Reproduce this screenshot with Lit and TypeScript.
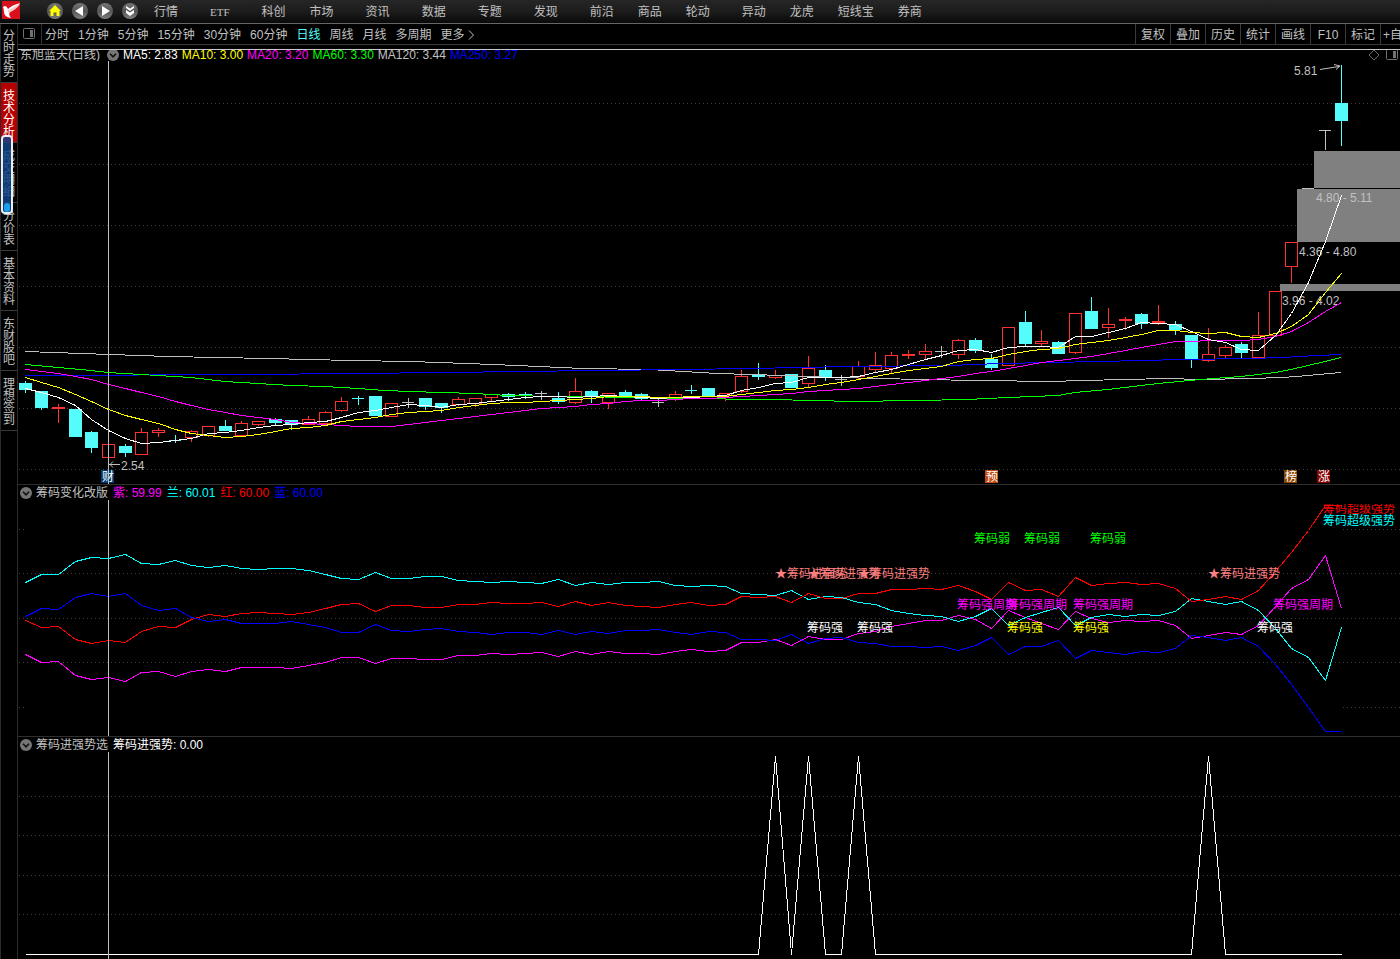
import { LitElement, html, svg, css } from "lit";
import { customElement, state } from "lit/decorators.js";
import { classMap } from "lit/directives/class-map.js";

type Kind = "up" | "down" | "flat";
/** kind, body top, body bottom, wick top, wick bottom */
type Candle = [Kind, number, number, number, number];

const FIRST_X = 25;
const STEP = 50 / 3;
const centre = (i: number) => Math.floor(FIRST_X + STEP * i + 0.01);

const CANDLES: Candle[] = [
  ["down", 383, 390, 381, 393], ["down", 391, 408, 391, 410], ["up", 407, 409, 404, 423], ["down", 409, 437, 409, 437],
  ["down", 432, 448, 431, 453], ["up", 444, 458, 444, 463], ["down", 446, 453, 444, 457], ["up", 432, 455, 428, 455],
  ["up", 430, 433, 428, 437], ["down", 440, 441, 435, 443], ["up", 431, 438, 430, 442], ["up", 426, 436, 426, 437],
  ["down", 426, 431, 420, 431], ["up", 423, 436, 421, 436], ["up", 421, 425, 421, 426], ["down", 419, 423, 418, 425],
  ["down", 420, 425, 420, 430], ["up", 419, 425, 416, 425], ["up", 412, 424, 411, 424], ["up", 401, 411, 397, 412],
  ["down", 398, 399, 396, 405], ["down", 396, 416, 396, 416], ["up", 403, 417, 403, 417], ["flat", 402, 403, 398, 408],
  ["down", 398, 407, 398, 410], ["down", 403, 408, 403, 413], ["up", 399, 405, 397, 406], ["up", 398, 404, 398, 407],
  ["up", 394, 398, 394, 401], ["down", 394, 397, 393, 401], ["down", 394, 396, 392, 399], ["flat", 393, 394, 391, 400],
  ["down", 398, 402, 392, 404], ["up", 391, 403, 378, 404], ["down", 391, 397, 390, 403], ["up", 393, 403, 393, 409],
  ["down", 392, 397, 390, 397], ["down", 394, 399, 393, 400], ["flat", 402, 403, 399, 407], ["up", 394, 399, 391, 401],
  ["down", 390, 391, 385, 394], ["down", 388, 396, 388, 396], ["up", 393, 396, 393, 401], ["up", 376, 392, 370, 393],
  ["down", 374, 377, 363, 380], ["up", 375, 378, 370, 379], ["down", 374, 388, 374, 388], ["up", 368, 384, 356, 388],
  ["down", 370, 377, 365, 381], ["flat", 379, 380, 375, 386], ["up", 366, 377, 361, 380], ["up", 365, 370, 352, 373],
  ["up", 355, 369, 352, 373], ["up", 354, 356, 350, 359], ["up", 351, 355, 344, 359], ["flat", 351, 352, 346, 358],
  ["up", 340, 355, 339, 359], ["down", 340, 351, 338, 353], ["down", 359, 368, 354, 370], ["up", 327, 366, 327, 366],
  ["down", 322, 344, 311, 346], ["up", 341, 344, 330, 346], ["down", 342, 354, 341, 354], ["up", 313, 353, 313, 354],
  ["down", 311, 329, 297, 329], ["up", 324, 328, 308, 338], ["up", 319, 321, 317, 330], ["down", 314, 324, 313, 329],
  ["up", 321, 323, 305, 325], ["down", 324, 330, 321, 335], ["down", 335, 359, 335, 368], ["up", 354, 361, 328, 362],
  ["up", 347, 356, 345, 359], ["down", 344, 353, 342, 359], ["up", 335, 358, 312, 358], ["up", 291, 336, 291, 336],
  ["up", 242, 267, 242, 283], ["flat", 188, 189, 188, 189], ["flat", 130, 131, 130, 150], ["down", 103, 121, 65, 146],
];

const MA5 = [388, 392, 397, 405, 419, 430, 438, 443, 442, 440, 438, 433, 432, 430, 427, 425, 424, 422, 421, 417,
  412, 410, 407, 404, 405, 407, 404, 403, 401, 399, 397, 396, 396, 397, 396, 395, 396, 397, 398, 397,
  397, 396, 395, 390, 387, 383, 382, 377, 377, 377, 376, 372, 369, 364, 359, 355, 350, 349, 352, 347,
  346, 346, 347, 336, 336, 332, 328, 322, 323, 324, 331, 339, 342, 349, 350, 335, 313, 282, 241, 195];
const MA10 = [377, 382, 387, 394, 401, 409, 415, 419, 423, 429, 433, 435, 437, 436, 434, 431, 428, 427, 425, 421,
  419, 417, 414, 412, 411, 410, 407, 405, 403, 402, 402, 401, 400, 399, 398, 396, 396, 396, 397, 397,
  396, 396, 396, 394, 392, 390, 389, 387, 384, 382, 379, 376, 373, 370, 368, 366, 361, 359, 358, 354,
  351, 349, 348, 344, 342, 340, 337, 334, 330, 330, 332, 333, 332, 336, 337, 333, 326, 314, 292, 273];
const MA20 = [369, 371, 373, 376, 379, 384, 388, 392, 396, 401, 405, 409, 412, 415, 417, 419, 422, 423, 424, 425,
  426, 426, 426, 424, 422, 420, 418, 416, 414, 412, 410, 408, 407, 406, 404, 403, 401, 400, 400, 399,
  398, 398, 397, 396, 395, 394, 393, 391, 390, 389, 388, 386, 384, 382, 380, 378, 376, 373, 371, 368,
  365, 362, 360, 358, 356, 353, 350, 347, 344, 341, 341, 340, 340, 340, 339, 336, 331, 322, 311, 302];

const MA60 = "25,364 58,367 91,370 108,372 141,374 191,377 225,381 258,383 291,385 325,386 358,388 385,390 410,391 442,392 475,393 491,394 508,395 558,396 650,397 683,398 767,399 817,400 850,401 917,400 967,399 1008,397 1058,395 1075,392 1108,389 1158,383 1200,379 1241,376 1275,372 1291,369 1325,361 1341,357";
const MA120 = "25,351 110,354 168,356 218,357 268,358 351,360 411,361 467,363 517,365 583,368 650,369 683,371 717,373 783,375 833,377 883,378 917,379 983,380 1050,381 1083,380 1167,378 1200,379 1250,378 1283,377 1308,375 1341,372";
const MA250 = "25,375 250,374 351,373 450,372 517,371 600,370 683,369 750,368 800,367 850,366 950,365 1000,363 1050,362 1100,361 1183,359 1250,358 1283,357 1317,355 1341,354";

const CYAN = [582, 574, 574, 561, 557, 558, 554, 563, 564, 560, 565, 567, 565, 568, 569, 568, 568, 570, 574, 578,
  579, 572, 578, 578, 576, 576, 580, 581, 582, 581, 582, 583, 579, 585, 582, 584, 582, 582, 581, 585,
  586, 585, 586, 593, 594, 595, 590, 599, 596, 597, 602, 604, 610, 613, 615, 616, 621, 616, 608, 625,
  617, 612, 607, 625, 617, 614, 616, 614, 615, 611, 598, 601, 604, 601, 610, 628, 648, 657, 680, 627];
const RED = [620, 627, 626, 639, 643, 640, 642, 631, 626, 627, 619, 614, 616, 613, 612, 613, 614, 612, 608, 604,
  603, 611, 605, 605, 607, 607, 604, 604, 602, 603, 603, 602, 606, 601, 605, 602, 605, 606, 607, 604,
  602, 605, 604, 596, 597, 596, 602, 593, 598, 598, 593, 593, 589, 589, 588, 589, 585, 591, 599, 582,
  590, 589, 596, 577, 585, 583, 582, 584, 583, 588, 601, 599, 596, 599, 590, 571, 552, 530, 505, 505];
const BLUE = [616, 608, 609, 597, 593, 596, 593, 605, 610, 608, 617, 621, 619, 623, 623, 623, 621, 624, 627, 632,
  632, 624, 630, 631, 629, 628, 631, 632, 634, 632, 632, 634, 630, 634, 631, 633, 630, 630, 629, 632,
  634, 631, 632, 639, 639, 640, 634, 643, 638, 637, 642, 643, 646, 646, 647, 646, 650, 645, 637, 654,
  646, 646, 640, 658, 650, 652, 654, 651, 652, 648, 635, 637, 640, 637, 646, 664, 684, 707, 731, 731];
const PURPLE = [654, 662, 661, 675, 679, 677, 681, 672, 671, 676, 671, 669, 671, 667, 667, 667, 668, 665, 662, 657,
  657, 663, 658, 658, 659, 659, 655, 655, 653, 654, 653, 652, 656, 651, 654, 651, 653, 653, 654, 651,
  649, 651, 650, 642, 642, 639, 645, 636, 639, 639, 633, 631, 626, 623, 620, 620, 615, 619, 628, 610,
  617, 623, 629, 611, 618, 622, 620, 621, 620, 625, 638, 635, 632, 634, 625, 606, 588, 579, 555, 608];

const SIGNALS = new Set([45, 47, 50, 71]);

const series = (ys: number[]) => ys.map((y, i) => `${centre(i) + 0.5},${y + 0.5}`).join(" ");

const MENU: [string, boolean][] = [
  ["行情", true], ["ETF", true], ["科创", false], ["市场", true], ["资讯", true], ["数据", true], ["专题", true],
  ["发现", true], ["前沿", false], ["商品", false], ["轮动", true], ["异动", false], ["龙虎", false],
  ["短线宝", false], ["券商", false],
];
const PERIODS = ["分时", "1分钟", "5分钟", "15分钟", "30分钟", "60分钟", "日线", "周线", "月线", "多周期"];
const TOOLS = ["复权", "叠加", "历史", "统计", "画线", "F10", "标记"];
const TABS = ["分时走势", "技术分析", "成交明细", "分价表", "基本资料", "东财股吧", "理想签到"];

const LABELS: [string, string, number, number][] = [
  ["green", "筹码弱", 974, 543], ["green", "筹码弱", 1024, 543], ["green", "筹码弱", 1090, 543],
  ["salmon", "★筹码进强势", 775, 578], ["salmon", "★筹码进强势", 808, 578],
  ["salmon", "★筹码进强势", 858, 578], ["salmon", "★筹码进强势", 1208, 578],
  ["magenta", "筹码强周期", 957, 609], ["magenta", "筹码强周期", 1007, 609],
  ["magenta", "筹码强周期", 1073, 609], ["magenta", "筹码强周期", 1273, 609],
  ["white", "筹码强", 807, 632], ["white", "筹码强", 857, 632], ["white", "筹码强", 1257, 632],
  ["yellow", "筹码强", 1007, 632], ["yellow", "筹码强", 1073, 632],
  ["cyan", "筹码超级强势", 1323, 525],
];
const BADGES: [string, number, string][] = [
  ["财", 101, "#003a70"], ["预", 985, "#c04a10"], ["榜", 1284, "#8a4600"], ["涨", 1317, "#840000"],
];

@customElement("app-root")
export class AppRoot extends LitElement {
  @state() private period = "日线";
  @state() private tab = "技术分析";

  static styles = css`
    :host {
      display: block;
      min-height: 100vh;
      background: #000;
      color: #c0c0c0;
      font: 12px/14px "Liberation Sans", "Noto Sans CJK SC", sans-serif;
      overflow: hidden;
    }
    * { box-sizing: border-box; }
    button {
      margin: 0;
      padding: 0;
      border: 0;
      background: none;
      color: inherit;
      font: inherit;
      white-space: nowrap;
      cursor: pointer;
    }
    svg { display: block; flex: none; }

    .top {
      display: flex;
      align-items: center;
      height: 24px;
      padding-left: 2px;
      border-bottom: 1px solid #666;
      background: linear-gradient(#262626, #1c1c1c 50%, #090909);
    }
    .logo { margin: -3px 26px 0 0; }
    .round { display: flex; width: 18px; margin: -1px 7px 0 0; }
    .menu { display: flex; gap: 24px; margin-left: 8px; white-space: nowrap; }
    .menu a { color: inherit; text-decoration: none; }
    .menu .wide { margin-right: 8px; }
    .menu .serif { font: 11px/14px "Liberation Serif", serif; }

    .body { display: flex; align-items: stretch; min-height: calc(100vh - 24px); }
    .side {
      position: relative;
      flex: none;
      display: flex;
      flex-direction: column;
      width: 18px;
      border: solid #2c2c2c;
      border-width: 0 1px;
    }
    .side button {
      padding: 7px 2px 4px;
      border-bottom: 1px solid #3a3a3a;
      line-height: 12px;
      white-space: normal;
      word-break: break-all;
    }
    .side button:first-child { padding: 6px 2px 4px; }
    .side .on { background: #b40000; color: #fff; }
    .thumb {
      position: absolute;
      left: 0;
      top: 111px;
      width: 12px;
      height: 79px;
      display: flex;
      flex-direction: column;
      align-items: center;
      justify-content: flex-end;
      border: 2px solid #e8eef6;
      border-radius: 4px;
      background: linear-gradient(rgba(50, 54, 120, 0.96), rgba(18, 68, 132, 0.86) 8px);
      pointer-events: none;
    }
    .thumb::after {
      content: "";
      width: 6px;
      height: 9px;
      border-radius: 3px;
      background: #1aa0ec;
    }

    .main { flex: 1; min-width: 0; }
    .bar {
      display: flex;
      height: 21px;
      border-bottom: 1px solid #3a3a3a;
      overflow: hidden;
    }
    .toggle {
      display: flex;
      align-items: center;
      width: 24px;
      padding-left: 4px;
      border-right: 1px solid #333;
    }
    .periods { display: flex; gap: 9px; margin-left: 3px; }
    .periods button { padding-top: 2px; }
    .periods .on { color: #54fcfc; }
    .more { display: flex; align-items: center; gap: 3px; }
    .tools { display: flex; margin-left: auto; }
    .tools button { width: 35px; padding-top: 2px; border-left: 1px solid #3a3a3a; }
    .tools .last { width: 20px; padding-left: 2px; overflow: hidden; text-align: left; }

    .panel { border-top: 1px solid #2e2e2e; }
    .panel.price { margin-top: 4px; border-top-color: #c8c8c8; }
    .legend {
      display: flex;
      align-items: center;
      gap: 5px;
      height: 15px;
      padding: 1px 0 0 2px;
      white-space: nowrap;
      overflow: hidden;
    }
    .price .legend { gap: 4px; height: 11px; align-items: flex-end; line-height: 12px; }
    .legend .title { display: flex; align-items: center; gap: 4px; }
    .price .title { gap: 7px; }
    .legend .corner { display: flex; gap: 6px; margin-left: auto; padding-right: 2px; }
    .chart { width: 100%; height: auto; }
    .chart text { font: 12px "Liberation Sans", "Noto Sans CJK SC", sans-serif; fill: #c0c0c0; }
    .chart .badge { fill: #fff; }

    .white { color: #fff; }
    .yellow { color: #ff0; }
    .magenta { color: #f0f; }
    .green { color: #0f0; }
    .blue { color: #00f; }
    .cyan { color: #0ff; }
    .red { color: #f00; }
    .salmon { color: #ff8080; }
    .chart text.tint { fill: currentColor; }

    .line { fill: none; stroke: currentColor; stroke-width: 1; shape-rendering: crispEdges; }
    .grid { stroke: #3c3c3c; stroke-dasharray: 1 3; shape-rendering: crispEdges; }
    .cross { stroke: #c0c0c0; shape-rendering: crispEdges; }
    .gap { fill: #808080; shape-rendering: crispEdges; }
    .candle { shape-rendering: crispEdges; }
    .up { stroke: #ff3232; fill: none; }
    .down { stroke: #54fcfc; fill: #54fcfc; }
    .flat { stroke: #c0c0c0; fill: #c0c0c0; }
    .arrow { stroke: #c0c0c0; fill: none; }
  `;

  private roundIcon(label: string, glyph: unknown) {
    return html`<button class="round" aria-label=${label}>
      <svg width="18" height="18" viewBox="0 0 18 18">
        <defs>
          <linearGradient id="g" x1="0" y1="0" x2="0" y2="1">
            <stop offset="0" stop-color="#777"></stop>
            <stop offset="0.5" stop-color="#555"></stop>
            <stop offset="1" stop-color="#808080"></stop>
          </linearGradient>
        </defs>
        <circle cx="9" cy="9" r="8" fill="url(#g)"></circle>
        ${glyph}
      </svg>
    </button>`;
  }

  private chevron() {
    return html`<button aria-label="展开">
      <svg width="12" height="12" viewBox="0 0 12 12">
        <circle cx="6" cy="6" r="6" fill="#757575"></circle>
        <path d="M3 4.8L6 7.8L9 4.8" fill="none" stroke="#111" stroke-width="1.6"></path>
      </svg>
    </button>`;
  }

  private grid(y: number, from = 19, to = 1400) {
    return svg`<line class="grid" x1=${from} x2=${to} y1=${y + 0.5} y2=${y + 0.5}></line>`;
  }

  private candle([kind, top, bottom, high, low]: Candle, i: number) {
    const x = centre(i);
    const mid = x + 0.5;
    const height = bottom - top;
    return svg`<g class="candle ${kind}">
      ${high < top ? svg`<line x1=${mid} x2=${mid} y1=${high} y2=${top}></line>` : ""}
      ${low > bottom ? svg`<line x1=${mid} x2=${mid} y1=${bottom} y2=${low}></line>` : ""}
      ${height <= 1
        ? svg`<line x1=${x - 6} x2=${x + 6} y1=${top + 0.5} y2=${top + 0.5}></line>`
        : svg`<rect x=${x - 5.5} y=${top + 0.5} width="12" height=${height - 1}></rect>`}
    </g>`;
  }

  private priceChart() {
    return html`<svg class="chart" viewBox="18 61 1382 423" role="img" aria-label="日线走势">
      ${[103, 164, 225, 286, 347, 408, 469].map((y) => this.grid(y))}
      <rect class="gap" x="1314" y="151" width="86" height="37"></rect>
      <rect class="gap" x="1297" y="189" width="103" height="53"></rect>
      <rect class="gap" x="1280" y="284" width="120" height="7"></rect>
      ${CANDLES.map((c, i) => this.candle(c, i))}
      <text x="1316" y="202">4.80 - 5.11</text>
      <text x="1299" y="256">4.36 - 4.80</text>
      <text x="1282" y="305">3.96 - 4.02</text>
      <g transform="translate(0 0.5)">
        <polyline class="line" points=${MA120}></polyline>
        <polyline class="line blue" points=${MA250}></polyline>
        <polyline class="line green" points=${MA60}></polyline>
      </g>
      <polyline class="line magenta" points=${series(MA20)}></polyline>
      <polyline class="line white" points=${series(MA5)}></polyline>
      <polyline class="line yellow" points=${series(MA10)}></polyline>
      <text x="1294" y="75">5.81</text>
      <path class="arrow" d="M1320 69.5L1339 66.5M1334 64.5L1340 66L1336 69.5"></path>
      <text x="121" y="470">2.54</text>
      <path class="arrow" d="M120 464.5H109M113 461.5L110 464.5L113 467.5"></path>
      ${BADGES.map(([text, x, fill]) => svg`
        <rect x=${x} y="470" width="13" height="13" fill=${fill}></rect>
        <text class="badge" x=${x + 1} y="481">${text}</text>`)}
      <line class="cross" x1="108.5" x2="108.5" y1="61" y2="484"></line>
    </svg>`;
  }

  private chipChart() {
    return html`<svg class="chart" viewBox="18 500 1382 236" role="img" aria-label="筹码变化改版">
      <defs><clipPath id="cut"><rect x="1320" y="504" width="80" height="14"></rect></clipPath></defs>
      ${[573, 618, 662].map((y) => this.grid(y))}
      ${[529, 707].map((y) => [this.grid(y, 19, 24), this.grid(y, 1343)])}
      <polyline class="line magenta" points=${series(PURPLE)}></polyline>
      <polyline class="line cyan" points=${series(CYAN)}></polyline>
      <polyline class="line red" points=${series(RED)}></polyline>
      <polyline class="line blue" points=${series(BLUE)}></polyline>
      <g clip-path="url(#cut)"><text class="tint red" x="1323" y="513">筹码超级强势</text></g>
      ${LABELS.map(([tone, text, x, y]) => svg`<text class="tint ${tone}" x=${x} y=${y}>${text}</text>`)}
      <line class="cross" x1="108.5" x2="108.5" y1="500" y2="736"></line>
    </svg>`;
  }

  private signalChart() {
    const points = CANDLES.map((_, i) => `${centre(i) + 0.5},${SIGNALS.has(i) ? 756.5 : 954.5}`).join(" ");
    return html`<svg class="chart" viewBox="18 752 1382 207" role="img" aria-label="筹码进强势选">
      ${[796, 835, 875, 914].map((y) => this.grid(y))}
      <polyline class="line white" points=${points}></polyline>
      <line class="cross" x1="108.5" x2="108.5" y1="752" y2="959"></line>
    </svg>`;
  }

  render() {
    return html`
      <header class="top">
        <svg class="logo" width="18" height="18" viewBox="0 0 18 18">
          <rect width="18" height="18" fill="#d8101c"></rect>
          <path d="M1 6Q4 3 6 8Q10 4 18 2Q14 8 8 11Q6 13 9 17Q2 16 2 11Q2 8 1 6Z" fill="#fff"></path>
          <path d="M9 8Q13 5 18 3Q14 9 8 11Q5 12 6 9Z" fill="#f6c8c8"></path>
        </svg>
        ${this.roundIcon("首页", svg`<path d="M9 3L15 9H13.5V14H10.5V10.5H7.5V14H4.5V9H3Z" fill="#ff0"></path>`)}
        ${this.roundIcon("后退", svg`<path d="M12 4V14L4 9Z" fill="#fff"></path>`)}
        ${this.roundIcon("前进", svg`<path d="M6 4V14L14 9Z" fill="#fff"></path>`)}
        ${this.roundIcon("下拉", svg`<path d="M5 4L9 6.5L13 4V6L9 9L5 6ZM5 8L9 10.5L13 8V11L9 14L5 11Z" fill="#fff"></path>`)}
        <nav class="menu">
          ${MENU.map(([name, wide]) => html`<a href="#" class=${classMap({ wide, serif: name === "ETF" })}>${name}</a>`)}
        </nav>
      </header>
      <div class="body">
        <nav class="side">
          ${TABS.map((t) => html`<button class=${classMap({ on: t === this.tab })} @click=${() => (this.tab = t)}>${t}</button>`)}
          <div class="thumb"></div>
        </nav>
        <main class="main">
          <div class="bar">
            <button class="toggle" aria-label="侧栏">
              <svg width="14" height="12" viewBox="0 0 14 12">
                <rect x="1.5" y="0.5" width="11" height="10" rx="1" fill="none" stroke="#707070"></rect>
                <rect x="8" y="2" width="3" height="7" fill="#707070"></rect>
              </svg>
            </button>
            <div class="periods">
              ${PERIODS.map((p) => html`<button class=${classMap({ on: p === this.period })} @click=${() => (this.period = p)}>${p}</button>`)}
              <button class="more">更多
                <svg width="7" height="10" viewBox="0 0 7 10"><path d="M1 0.5L5.5 5L1 9.5" fill="none" stroke="#c0c0c0"></path></svg>
              </button>
            </div>
            <div class="tools">
              ${TOOLS.map((t) => html`<button>${t}</button>`)}
              <button class="last">+自选</button>
            </div>
          </div>
          <section class="panel price">
            <div class="legend">
              <span class="title">东旭蓝天(日线) ${this.chevron()}</span>
              <span class="white">MA5: 2.83</span>
              <span class="yellow">MA10: 3.00</span>
              <span class="magenta">MA20: 3.20</span>
              <span class="green">MA60: 3.30</span>
              <span>MA120: 3.44</span>
              <span class="blue">MA250: 3.27</span>
              <span class="corner">
                <svg width="12" height="12" viewBox="0 0 12 12"><path d="M6 1L11 6L6 11L1 6Z" fill="none" stroke="#686868"></path></svg>
                <svg width="12" height="12" viewBox="0 0 12 12">
                  <rect x="0.5" y="0.5" width="11" height="10" rx="1" fill="none" stroke="#707070"></rect>
                  <rect x="7" y="2" width="3" height="7" fill="#707070"></rect>
                </svg>
              </span>
            </div>
            ${this.priceChart()}
          </section>
          <section class="panel">
            <div class="legend">
              <span class="title">${this.chevron()}筹码变化改版</span>
              <span class="magenta">紫: 59.99</span>
              <span class="cyan">兰: 60.01</span>
              <span class="red">红: 60.00</span>
              <span class="blue">蓝: 60.00</span>
            </div>
            ${this.chipChart()}
          </section>
          <section class="panel">
            <div class="legend">
              <span class="title">${this.chevron()}筹码进强势选</span>
              <span class="white">筹码进强势: 0.00</span>
            </div>
            ${this.signalChart()}
          </section>
        </main>
      </div>
    `;
  }
}
